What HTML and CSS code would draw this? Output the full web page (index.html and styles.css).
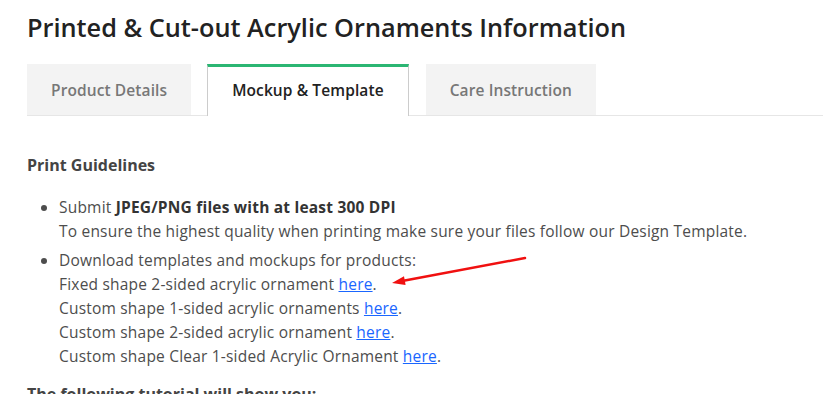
FILE: index.html
```html
<!DOCTYPE html>
<html lang="en">
<head>
  <meta charset="UTF-8">
  <meta name="viewport" content="width=device-width, initial-scale=1.0">
  <title>Printed &amp; Cut-out Acrylic Ornaments Information</title>
  <link rel="stylesheet" href="styles.css">
</head>
<body>
  <h1 class="page-title">Printed &amp; Cut-out Acrylic Ornaments Information</h1>

  <div class="tabs">
    <button class="tab-button">Product Details</button>
    <button class="tab-button active">Mockup &amp; Template</button>
    <button class="tab-button">Care Instruction</button>
  </div>

  <div class="tab-content">
    <h3 class="section-title">Print Guidelines</h3>
    <ul class="guide-list">
      <li>
        Submit <strong>JPEG/PNG files with at least 300 DPI</strong><br>
        To ensure the highest quality when printing make sure your files follow our Design Template.
      </li>
      <li class="download-item">
        Download templates and mockups for products:<br>
        Fixed shape 2-sided acrylic ornament <a href="#">here</a>.<br>
        Custom shape 1-sided acrylic ornaments <a href="#">here</a>.<br>
        Custom shape 2-sided acrylic ornament <a href="#">here</a>.<br>
        Custom shape Clear 1-sided Acrylic Ornament <a href="#">here</a>.
        <!-- red pointer drawn over the screenshot -->
        <svg class="pointer" width="150" height="40" viewBox="0 0 150 40">
          <line x1="147" y1="3" x2="26.8" y2="25.6" stroke="#f01010" stroke-width="2.5" stroke-linecap="round"/>
          <polygon points="14,28 27.6,30 26,21.2" fill="#f01010"/>
        </svg>
      </li>
    </ul>
    <h3 class="section-title">The following tutorial will show you:</h3>
  </div>
</body>
</html>
```

FILE: styles.css
```css
body {
  font-family: "Open Sans", Arial, sans-serif;
  margin: 0;
  padding: 0 0 0 27px;
  background-color: white;
  color: #4d4d4d;
}
.page-title {
  font-size: 25.3px;
  font-weight: 600;
  color: #222;
  margin: 10px 0 20px;
  line-height: 34px;
}
.tabs {
  display: flex;
  gap: 16px;
  border-bottom: 1px solid #e6e6e6;
  height: 51px;
}
.tab-button {
  font-family: inherit;
  font-size: 15.5px;
  font-weight: 600;
  letter-spacing: 0.1px;
  color: #777;
  background-color: #f3f3f3;
  border: none;
  padding: 0 24px;
  height: 51px;
  cursor: pointer;
}
.tab-button.active {
  background-color: white;
  color: #222;
  border-top: 3px solid #2bb673;
  border-left: 1px solid #ccc;
  border-right: 1px solid #ccc;
  height: 52px;
  padding-bottom: 3px;
}
.tab-button.active + .tab-button {
  margin-left: 1px;
}
.tab-content {
  padding-top: 37px;
}
.section-title {
  font-size: 16px;
  font-weight: 700;
  color: #444;
  margin: 0 0 18px;
  line-height: 24px;
}
.guide-list {
  margin: 0 0 14px;
  padding-left: 32px;
  font-size: 15.5px;
  letter-spacing: 0.2px;
  line-height: 24px;
}
.guide-list li {
  margin-bottom: 5px;
}
.guide-list strong {
  color: #333;
}
.guide-list a {
  color: #1a66ff;
}
.download-item {
  position: relative;
}
.pointer {
  position: absolute;
  left: 319px;
  top: 7px;
}
```
